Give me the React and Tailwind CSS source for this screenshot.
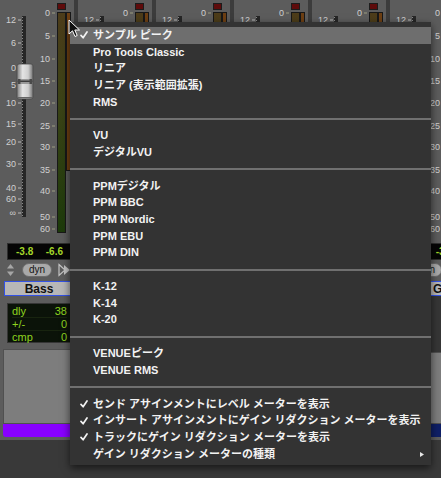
import React from "react";

const faderMarks = [
  ["12", 20], ["6", 43], ["0", 68], ["5", 85], ["10", 103], ["15", 124],
  ["20", 142], ["30", 164], ["40", 188], ["60", 199], ["∞", 213],
];

const meterMarks = [
  ["0", 13], ["5", 36], ["10", 59], ["15", 81], ["20", 103], ["25", 126],
  ["30", 147], ["35", 170], ["40", 191], ["50", 217], ["60", 229],
];

const strips = [
  { name: "Bass", vals: ["-3.8", "-6.6"], color: "bg-[#8800ff]" },
  { name: "Kick", vals: ["-4.2", "-7.1"], color: "bg-[#e0402a]" },
  { name: "Snare", vals: ["-5.0", "-8.3"], color: "bg-[#e0402a]" },
  { name: "OH", vals: ["-9.4", "-9.9"], color: "bg-[#e0a020]" },
  { name: "Keys", vals: ["-6.1", "-7.7"], color: "bg-[#20a0e0]" },
  { name: "Guitar", vals: ["-2.4", "-3.5"], color: "bg-[#0f1f66]", empty: true, nameClass: "justify-start pl-[38px]" },
];

const menu = [
  { label: "サンプル ピーク", checked: true, active: true },
  { label: "Pro Tools Classic" },
  { label: "リニア" },
  { label: "リニア (表示範囲拡張)" },
  { label: "RMS" },
  { sep: true },
  { label: "VU" },
  { label: "デジタルVU" },
  { sep: true },
  { label: "PPMデジタル" },
  { label: "PPM BBC" },
  { label: "PPM Nordic" },
  { label: "PPM EBU" },
  { label: "PPM DIN" },
  { sep: true },
  { label: "K-12" },
  { label: "K-14" },
  { label: "K-20" },
  { sep: true },
  { label: "VENUEピーク" },
  { label: "VENUE RMS" },
  { sep: true },
  { label: "センド アサインメントにレベル メーターを表示", checked: true },
  { label: "インサート アサインメントにゲイン リダクション メーターを表示", checked: true },
  { label: "トラックにゲイン リダクション メーターを表示", checked: true },
  { label: "ゲイン リダクション メーターの種類", submenu: true },
];

const LABEL_FONT = "Liberation Sans, sans-serif";

function MeterSection() {
  return (
    <svg width="74" height="238" className="block shrink-0">
      <defs>
        <linearGradient id="meterFill" x1="0" y1="0" x2="0" y2="1">
          <stop offset="0" stopColor="#4d3c1a" />
          <stop offset="0.4" stopColor="#3c4317" />
          <stop offset="1" stopColor="#1d3b0b" />
        </linearGradient>
        <linearGradient id="knobFill" x1="0" y1="0" x2="1" y2="0">
          <stop offset="0" stopColor="#7e7e7e" />
          <stop offset="0.35" stopColor="#e4e4e4" />
          <stop offset="0.7" stopColor="#cfcfcf" />
          <stop offset="1" stopColor="#727272" />
        </linearGradient>
      </defs>

      {/* fader scale */}
      {faderMarks.map(([t, y]) => (
        <g key={"f" + t}>
          <text x="16" y={y + 3} textAnchor="end" fontSize="9" fill="#d0d0d0" fontFamily={LABEL_FONT}>
            {t}
          </text>
          <rect x="18" y={y - 0.5} width="3" height="1" fill="#b8b8b8" />
        </g>
      ))}
      <rect x="22" y="16" width="4" height="201" fill="#262626" />
      <line x1="22.5" y1="17" x2="22.5" y2="216" stroke="#8a8a8a" strokeWidth="1" strokeDasharray="1 2" />

      {/* fader knob */}
      <rect x="17" y="64" width="16" height="35" rx="2" fill="url(#knobFill)" stroke="#4a4a4a" strokeWidth="0.8" />
      <rect x="17.5" y="79" width="15" height="5" fill="#9a9a9a" />
      <rect x="17.5" y="80.5" width="15" height="1.5" fill="#3c3c3c" />
      <rect x="17.5" y="79" width="3" height="5" fill="#4a4a4a" />
      <rect x="29.5" y="79" width="3" height="5" fill="#4a4a4a" />
      <rect x="18" y="97" width="14" height="1.5" fill="#666666" />

      {/* meter scale */}
      {meterMarks.map(([t, y]) => (
        <g key={"m" + t}>
          <text x="50" y={y + 3} textAnchor="end" fontSize="9" fill="#d0d0d0" fontFamily={LABEL_FONT}>
            {t}
          </text>
          <rect x="52" y={y - 0.5} width="3" height="1" fill="#9c9c80" />
        </g>
      ))}
      <rect x="57.5" y="3.5" width="8" height="6" fill="#5e0b0b" stroke="#1c1c1c" />
      <rect x="57.5" y="12.5" width="8" height="220" fill="url(#meterFill)" stroke="#181818" />
      <rect x="66.5" y="12.5" width="4" height="158" fill="#6d3f13" stroke="#181818" />
    </svg>
  );
}

function UpDown() {
  return (
    <svg width="9" height="14" viewBox="0 0 9 14">
      <path d="M4.5 1 L8 5.5 L1 5.5 Z" fill="#a6a6a6" />
      <path d="M4.5 13 L8 8.5 L1 8.5 Z" fill="#a6a6a6" />
    </svg>
  );
}

function Arrows() {
  return (
    <svg width="13" height="14" viewBox="0 0 13 14">
      <path d="M1 1.5 L7 7 L1 12.5 Z" fill="none" stroke="#c4c4c4" strokeWidth="1.2" />
      <path d="M6 2 L12 7 L6 12 Z" fill="#c4c4c4" />
    </svg>
  );
}

function Strip({ name, vals, color, empty, nameClass }) {
  return (
    <div className="w-[78px] h-[440px] shrink-0 bg-[#5c5c5c] border-r-4 border-[#3c3c3c] flex flex-col">
      <MeterSection />

      <div className="mt-[5px] ml-[7px] w-[64px] h-[17px] bg-[#050505] border border-[#2e2e2e] flex items-center justify-between pl-[8px] pr-[7px] text-[10px] font-bold text-[#a3d62a]">
        <span>{vals[0]}</span>
        <span>{vals[1]}</span>
      </div>

      <div className="mt-[2px] h-[16px] flex items-center">
        <div className="ml-[6px] flex">
          <UpDown />
        </div>
        <div className="ml-[7px] w-[30px] h-[14px] rounded-full bg-[#a9a9a9] border border-[#6c6c6c] flex items-center justify-center text-[10px] text-[#141414] leading-none">
          dyn
        </div>
        <div className="ml-[6px] flex">
          <Arrows />
        </div>
      </div>

      <div
        className={
          "mt-[3px] ml-[4px] w-[70px] h-[15px] bg-[#b7b7b7] border border-[#3352e6] flex items-center text-[12px] font-bold text-[#111] leading-none " +
          (nameClass || "justify-center")
        }
      >
        {name}
      </div>

      {empty ? (
        <div className="mt-0 h-[56px] bg-[#363636]" />
      ) : (
        <div className="mt-[7px] ml-[7px] w-[64px] h-[40px] bg-[#0b1309] border border-[#353535] pt-[1px] pl-[4px] pr-[3px] text-[11px] text-[#8fd41f] leading-none">
          <div className="h-[13px] flex items-center justify-between border-b border-[#18240f]">
            <span>dly</span>
            <span>38</span>
          </div>
          <div className="h-[13px] flex items-center justify-between border-b border-[#18240f]">
            <span>+/-</span>
            <span>0</span>
          </div>
          <div className="h-[12px] flex items-center justify-between">
            <span>cmp</span>
            <span>0</span>
          </div>
        </div>
      )}

      <div className={(empty ? "mt-0 h-[72px]" : "mt-[6px] h-[75px]") + " ml-[3px] w-[70px] bg-[#7d7d7d] border border-[#505050]"} />
      <div className={"ml-[3px] w-[70px] h-[13px] rounded-b-[3px] " + color} />
    </div>
  );
}

function Check() {
  return (
    <svg width="8" height="8" viewBox="0 0 8 8">
      <path d="M1 4.4 L3.1 6.8 L7 1" fill="none" stroke="#f2f2f2" strokeWidth="1.7" strokeLinecap="round" strokeLinejoin="round" />
    </svg>
  );
}

function Cursor() {
  return (
    <svg width="13" height="19" viewBox="0 0 13 19" className="absolute left-[68px] top-[19px]">
      <path
        d="M1 1 L1 15 L4.5 11.8 L7 17.5 L9.2 16.5 L6.8 11 L11.5 11 Z"
        fill="#111"
        stroke="#fff"
        strokeWidth="1"
        strokeLinejoin="round"
      />
    </svg>
  );
}

function Menu() {
  return (
    <div className="absolute left-[70px] top-[22px] w-[361px] bg-[#333333] pt-[5px] pb-[3px] shadow-[0_3px_8px_rgba(0,0,0,0.6)]">
      {menu.map((m, i) =>
        m.sep ? (
          <div key={i} className="h-[17px] flex items-center">
            <div className="h-[2px] w-full bg-[#707070]" />
          </div>
        ) : (
          <div
            key={i}
            className={
              "h-[16.7px] flex items-center text-[11px] font-bold text-[#f2f2f2] leading-none whitespace-nowrap " +
              (m.active ? "bg-[#6e6e6e]" : "")
            }
          >
            <span className="w-[23px] pl-[10px] flex items-center">{m.checked ? <Check /> : null}</span>
            <span>{m.label}</span>
            {m.submenu ? (
              <svg width="4" height="5" viewBox="0 0 4 5" className="ml-auto mr-[7px]">
                <path d="M0 0 L4 2.5 L0 5 Z" fill="#e8e8e8" />
              </svg>
            ) : null}
          </div>
        )
      )}
    </div>
  );
}

export default function App() {
  return (
    <div
      className="relative w-[441px] h-[478px] overflow-hidden bg-[#393939]"
      style={{ fontFamily: '"Liberation Sans", "Noto Sans CJK JP", sans-serif' }}
    >
      <div className="flex">
        {strips.map((s) => (
          <Strip key={s.name} {...s} />
        ))}
      </div>
      <Menu />
      <Cursor />
    </div>
  );
}
